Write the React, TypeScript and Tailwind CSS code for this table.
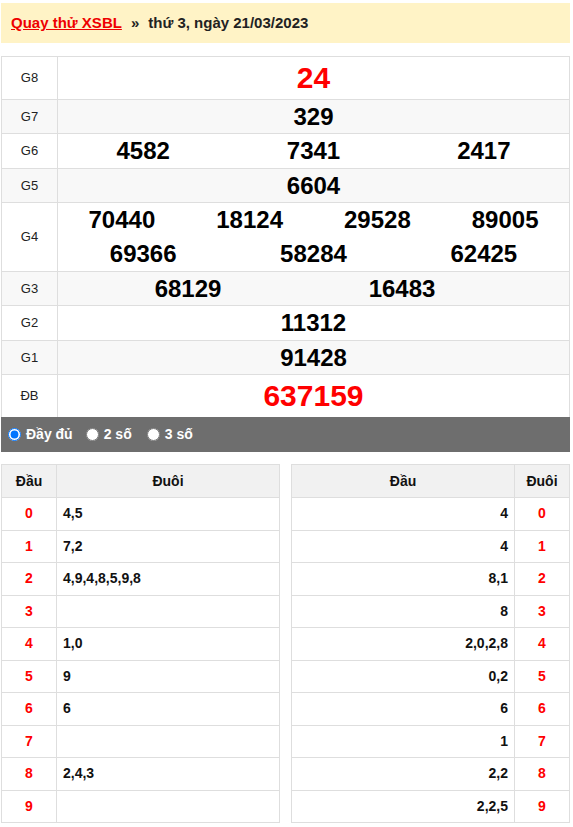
const font = { fontFamily: '"Liberation Sans", Arial, sans-serif' };

type Row = { label: string; lines: string[][]; height: string; alt?: boolean; red?: boolean; big?: boolean };

const rows: Row[] = [
  { label: 'G8', lines: [['24']], height: 'h-[43px]', red: true, big: true },
  { label: 'G7', lines: [['329']], height: 'h-[34px]', alt: true },
  { label: 'G6', lines: [['4582', '7341', '2417']], height: 'h-[35px]' },
  { label: 'G5', lines: [['6604']], height: 'h-[34px]', alt: true },
  { label: 'G4', lines: [['70440', '18124', '29528', '89005'], ['69366', '58284', '62425']], height: 'h-[69px]' },
  { label: 'G3', lines: [['68129', '16483']], height: 'h-[34px]', alt: true },
  { label: 'G2', lines: [['11312']], height: 'h-[35px]' },
  { label: 'G1', lines: [['91428']], height: 'h-[34px]', alt: true },
  { label: 'ĐB', lines: [['637159']], height: 'h-[43px]', red: true, big: true },
];

const dau = ['4,5', '7,2', '4,9,4,8,5,9,8', '', '1,0', '9', '6', '', '2,4,3', ''];
const duoi = ['4', '4', '8,1', '8', '2,0,2,8', '0,2', '6', '1', '2,2', '2,2,5'];

function Line({ nums, red, big }: { nums: string[]; red?: boolean; big?: boolean }) {
  const cls = `font-bold leading-none ${big ? 'text-[30px]' : 'text-[24px]'} ${red ? 'text-[#ff0000]' : 'text-black'}`;
  if (nums.length === 2) {
    // G3 sits off-centre in the original
    return (
      <div className="flex flex-1 items-center">
        <span className={`w-[260px] text-center ${cls}`}>{nums[0]}</span>
        <span className={`w-[168px] text-center ${cls}`}>{nums[1]}</span>
      </div>
    );
  }
  const cols = nums.length === 4 ? 'grid-cols-4' : nums.length === 3 ? 'grid-cols-3' : 'grid-cols-1';
  return (
    <div className={`grid flex-1 items-center ${cols}`}>
      {nums.map((n) => (
        <span key={n} className={`text-center ${cls}`}>
          {n}
        </span>
      ))}
    </div>
  );
}

function LotoTable({ side }: { side: 'left' | 'right' }) {
  const left = side === 'left';
  return (
    <div className="w-[279px] border-x border-b border-[#dedede] text-[14px] font-bold">
      <div className={`flex h-[33px] border-t border-[#dedede] bg-[#f1f1f1] ${left ? '' : 'flex-row-reverse'}`}>
        <div className={`flex w-[55px] items-center justify-center ${left ? 'border-r' : 'border-l'} border-[#dedede]`}>
          {left ? 'Đầu' : 'Đuôi'}
        </div>
        <div className="flex flex-1 items-center justify-center">{left ? 'Đuôi' : 'Đầu'}</div>
      </div>
      {Array.from({ length: 10 }).map((_, i) => (
        <div
          key={i}
          className={`flex h-[32.5px] border-t border-[#dedede] ${left ? '' : 'flex-row-reverse'}`}
        >
          <div
            className={`flex w-[55px] items-center justify-center text-[#ff0000] ${left ? 'border-r' : 'border-l'} border-[#dedede]`}
          >
            {i}
          </div>
          <div className={`flex flex-1 items-center ${left ? 'justify-start pl-[6px]' : 'justify-end pr-[6px]'}`}>
            {left ? dau[i] : duoi[i]}
          </div>
        </div>
      ))}
    </div>
  );
}

export default function App() {
  return (
    <div className="min-h-[827px] bg-white text-[#111]" style={font}>
      <div className="ml-[1px] w-[569px] pt-[3px]">
        <div className="flex h-[40px] items-center bg-[#fff3c6] pl-[10px] text-[15px] font-bold">
          <a className="text-[#ee0000] underline">Quay thử XSBL</a>
          <span className="mx-[9px] text-[#222]">»</span>
          <span className="text-[#222]">thứ 3, ngày 21/03/2023</span>
        </div>

        <div className="mt-[13px] border-x border-[#dedede]">
          {rows.map((r) => (
            <div key={r.label} className={`flex border-t border-[#dedede] ${r.height} ${r.alt ? 'bg-[#f8f8f8]' : 'bg-white'}`}>
              <div className="flex w-[56px] items-center justify-center border-r border-[#dedede] text-[13px] text-[#222]">
                {r.label}
              </div>
              <div className="flex flex-1 flex-col">
                {r.lines.map((l, i) => (
                  <Line key={i} nums={l} red={r.red} big={r.big} />
                ))}
              </div>
            </div>
          ))}
        </div>

        <div className="flex h-[35px] items-center bg-[#6e6e6e] pl-[7px] text-[14px] font-bold text-white">
          <label className="flex items-center">
            <input type="radio" name="mode" defaultChecked className="m-0 h-[13px] w-[13px]" />
            <span className="ml-[5px]">Đầy đủ</span>
          </label>
          <label className="ml-[13px] flex items-center">
            <input type="radio" name="mode" className="m-0 h-[13px] w-[13px]" />
            <span className="ml-[5px]">2 số</span>
          </label>
          <label className="ml-[15px] flex items-center">
            <input type="radio" name="mode" className="m-0 h-[13px] w-[13px]" />
            <span className="ml-[5px]">3 số</span>
          </label>
        </div>

        <div className="mt-[12px] flex justify-between">
          <LotoTable side="left" />
          <LotoTable side="right" />
        </div>
      </div>
    </div>
  );
}
